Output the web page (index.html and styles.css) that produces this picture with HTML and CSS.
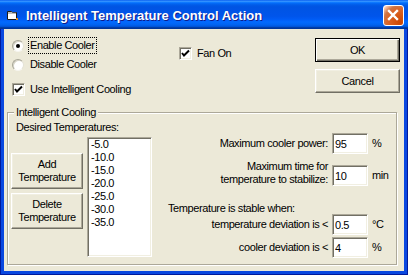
FILE: index.html
```html
<!DOCTYPE html>
<html lang="en">
<head>
    <meta charset="UTF-8">
    <title>Intelligent Temperature Control Action</title>
    <link rel="stylesheet" href="styles.css">
</head>
<body>
    <div class="window">
        <div class="titlebar">
            <svg class="app-icon" width="11" height="9" viewBox="0 0 11 9">
                <path d="M0.5 0.5 H4.5 L5.5 1.5 H9.5 V8.5 H0.5 Z" fill="#fff" stroke="#1a1a1a"/>
                <path d="M1 2 H9" stroke="#7a7a7a"/>
                <rect x="9" y="7" width="2" height="2" fill="#e08a1e"/>
            </svg>
            <span class="title">Intelligent Temperature Control Action</span>
            <div class="close">
                <svg width="21" height="21" viewBox="0 0 21 21">
                    <path d="M6 6 L14 14 M14 6 L6 14" stroke="#fff" stroke-width="2.4" stroke-linecap="square"/>
                </svg>
            </div>
        </div>

        <div class="client">
            <div class="top">
                <div class="choices">
                    <div class="opt">
                        <span class="radio checked"></span>
                        <span class="text focus">Enable Cooler</span>
                    </div>
                    <div class="opt">
                        <span class="radio"></span>
                        <span class="text">Disable Cooler</span>
                    </div>
                    <div class="opt opt-gap">
                        <span class="check">
                            <svg width="9" height="9" viewBox="0 0 9 9"><path d="M1 4 L3 6.5 L8 1.5" fill="none" stroke="#000" stroke-width="2"/></svg>
                        </span>
                        <span class="text">Use Intelligent Cooling</span>
                    </div>
                </div>

                <div class="opt fan">
                    <span class="check">
                        <svg width="9" height="9" viewBox="0 0 9 9"><path d="M1 4 L3 6.5 L8 1.5" fill="none" stroke="#000" stroke-width="2"/></svg>
                    </span>
                    <span class="text">Fan On</span>
                </div>

                <div class="actions">
                    <button class="btn btn-default">OK</button>
                    <button class="btn">Cancel</button>
                </div>
            </div>

            <fieldset class="group">
                <legend>Intelligent Cooling</legend>
                <div class="group-body">
                    <div class="temps">
                        <div class="caption">Desired Temperatures:</div>
                        <div class="temps-body">
                            <div class="temp-buttons">
                                <button class="btn btn-tall">Add<br>Temperature</button>
                                <button class="btn btn-tall">Delete<br>Temperature</button>
                            </div>
                            <ul class="listbox">
                                <li>-5.0</li>
                                <li>-10.0</li>
                                <li>-15.0</li>
                                <li>-20.0</li>
                                <li>-25.0</li>
                                <li>-30.0</li>
                                <li>-35.0</li>
                            </ul>
                        </div>
                    </div>

                    <div class="settings">
                        <div class="row">
                            <label class="field-label">Maximum cooler power:</label>
                            <input class="field" type="text" value="95">
                            <span class="unit">%</span>
                        </div>
                        <div class="row row-tall">
                            <label class="field-label">Maximum time for<br>temperature to stabilize:</label>
                            <input class="field" type="text" value="10">
                            <span class="unit">min</span>
                        </div>
                        <div class="note">Temperature is stable when:</div>
                        <div class="row">
                            <label class="field-label">temperature deviation is &lt;</label>
                            <input class="field" type="text" value="0.5">
                            <span class="unit">°C</span>
                        </div>
                        <div class="row row-last">
                            <label class="field-label">cooler deviation is &lt;</label>
                            <input class="field" type="text" value="4">
                            <span class="unit">%</span>
                        </div>
                    </div>
                </div>
            </fieldset>
        </div>
    </div>
</body>
</html>
```

FILE: styles.css
```css
* {
    box-sizing: border-box;
}

body {
    margin: 0;
    background: #fff;
    font-family: 'Liberation Sans', Arial, sans-serif;
    font-size: 11px;
    letter-spacing: -0.4px;
    color: #000;
    overflow: hidden;
}

.window {
    width: 408px;
    height: 275px;
    display: flex;
    flex-direction: column;
    background: #0a48e0;
    box-shadow: inset 1px 0 #001a9c, inset -1px 0 #001a9c, inset 0 -1px #001a9c;
}

.titlebar {
    flex: none;
    height: 29px;
    display: flex;
    align-items: center;
    padding: 0 4px 0 7px;
    background: linear-gradient(to bottom, #0058ee 0%, #3a93ff 4%, #288eff 6%, #127dff 8%, #036ffc 10%, #0262ee 14%, #0057e5 20%, #0054e3 24%, #0055eb 56%, #005bf5 66%, #026afe 76%, #0062ef 86%, #0052d6 92%, #0040ab 94%, #003092 100%);
}

.app-icon {
    flex: none;
    margin: 1px 8px 0 0;
}

.title {
    flex: 1;
    color: #fff;
    font-weight: bold;
    font-size: 13px;
    letter-spacing: 0;
    padding-top: 2px;
    text-shadow: 1px 1px #0f1b89;
    white-space: nowrap;
}

.close {
    flex: none;
    width: 21px;
    height: 21px;
    align-self: flex-start;
    margin-top: 5px;
    border: 1px solid #fff;
    border-radius: 3px;
    background: radial-gradient(circle at 85% 85%, #cc4600 0%, #dc6527 55%, #cd7546 72%, #ffccb2 92%, #fff 100%);
}

.close svg {
    display: block;
    margin: -1px;
}

.client {
    flex: 1;
    margin: 0 4px 4px;
    background: #ece9d8;
    display: flex;
    flex-direction: column;
}

.top {
    display: flex;
    padding: 8px 4px 0 8px;
}

.choices {
    width: 167px;
    display: flex;
    flex-direction: column;
}

.opt {
    display: flex;
    align-items: center;
    height: 17px;
}

.opt + .opt {
    margin-top: 2px;
}

.opt.opt-gap {
    margin-top: 8px;
}

.fan {
    margin-top: 8px;
}

.text {
    border: 1px dotted transparent;
    padding: 0 1px;
    line-height: 15px;
    white-space: nowrap;
}

.text.focus {
    border-color: #000;
}

.radio {
    position: relative;
    width: 12px;
    height: 12px;
    margin-right: 4px;
    border-radius: 50%;
    background: #fff;
    border: 1px solid;
    border-color: #a7a596 #e4e2d6 #f6f5ef #a7a596;
    box-shadow: inset 1px 1px #d6d3c6;
}

.radio.checked::after {
    content: '';
    position: absolute;
    left: 3px;
    top: 3px;
    width: 4px;
    height: 4px;
    border-radius: 50%;
    background: #000;
}

.check {
    width: 13px;
    height: 13px;
    margin-right: 3px;
    background: #fff;
    border: 1px solid;
    border-color: #aca899 #fff #fff #aca899;
    box-shadow: inset 1px 1px #716f64, inset -1px -1px #f1efe2;
    display: flex;
    align-items: center;
    justify-content: center;
}

.check svg {
    display: block;
}

.actions {
    margin-left: auto;
    padding-top: 1px;
    display: flex;
    flex-direction: column;
    gap: 7px;
}

.btn {
    width: 85px;
    height: 24px;
    padding: 0;
    font: inherit;
    letter-spacing: inherit;
    color: #000;
    background: #ece9d8;
    border: 1px solid;
    border-color: #fff #716f64 #716f64 #fff;
    box-shadow: inset -1px -1px #aca899, inset 1px 1px #f1efe2;
}

.btn-default {
    border-color: #000;
    box-shadow: inset 1px 1px #fff, inset -1px -1px #716f64, inset -2px -2px #aca899;
}

.btn-tall {
    width: 72px;
    height: 36px;
    line-height: 13px;
}

.group {
    flex: 1;
    min-width: 0;
    margin: 8px 7px 6px 3px;
    padding: 0 0 0 3px;
    border: 1px solid #aca899;
    box-shadow: 1px 1px #fff, inset 1px 1px #fff;
}

.group legend {
    margin-left: 3px;
    padding: 0 2px;
    line-height: 13px;
    background: #ece9d8;
}

.group-body {
    display: flex;
    gap: 16px;
}

.temps {
    width: 141px;
    flex: none;
}

.caption {
    padding: 2px 0 0 5px;
    line-height: 13px;
}

.temps-body {
    display: flex;
    gap: 4px;
    margin-top: 3px;
}

.temp-buttons {
    display: flex;
    flex-direction: column;
    gap: 4px;
    padding-top: 16px;
}

.listbox {
    width: 65px;
    height: 120px;
    margin: 0;
    padding: 0 2px;
    list-style: none;
    line-height: 13px;
    background: #fff;
    border: 1px solid;
    border-color: #aca899 #fff #fff #aca899;
    box-shadow: inset 1px 1px #716f64, inset -1px -1px #f1efe2;
}

.listbox li {
    padding-left: 1px;
}

.settings {
    flex: 1;
    padding-top: 14px;
}

.row {
    display: grid;
    grid-template-columns: 160px 36px 1fr;
    column-gap: 4px;
    align-items: center;
    height: 21px;
}

.row-tall {
    height: 26px;
    margin-top: 6px;
    align-items: end;
}

.row-last {
    margin-top: 2px;
}

.field-label {
    text-align: right;
    line-height: 13px;
    white-space: nowrap;
}

.field {
    width: 36px;
    height: 21px;
    margin: 0;
    padding: 0 0 0 2px;
    font: inherit;
    letter-spacing: inherit;
    color: #000;
    background: #fff;
    border: 1px solid;
    border-color: #aca899 #fff #fff #aca899;
    box-shadow: inset 1px 1px #716f64, inset -1px -1px #f1efe2;
    outline: none;
}

.unit {
    line-height: 21px;
}

.note {
    margin-top: 17px;
    line-height: 11px;
    white-space: nowrap;
}
```
